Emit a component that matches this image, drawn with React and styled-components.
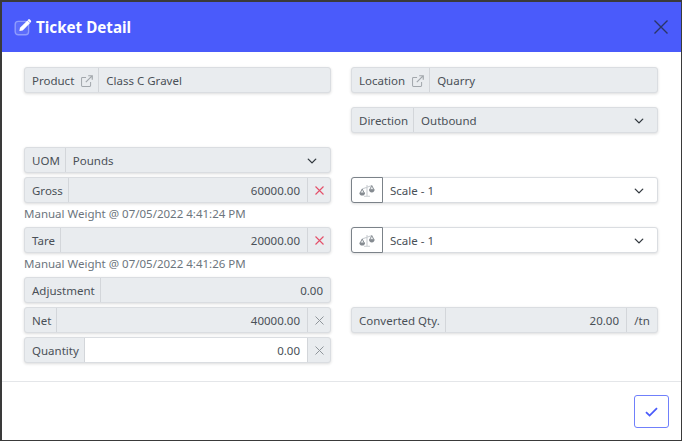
import React from 'react';
import styled, { createGlobalStyle } from 'styled-components';

const GlobalStyle = createGlobalStyle`
  html, body {
    margin: 0;
    padding: 0;
    background: #fff;
  }
  body {
    font-family: "Noto Sans", "Open Sans", sans-serif;
  }
`;

const Dialog = styled.div`
  box-sizing: border-box;
  width: 682px;
  height: 441px;
  border: 1px solid #3a3a3a;
  border-top-width: 2px;
  border-left-width: 2px;
  display: flex;
  flex-direction: column;
  background: #fff;
`;

const Header = styled.header`
  height: 50px;
  flex: none;
  background: #4a5bfb;
  display: flex;
  align-items: center;
  justify-content: space-between;
  padding: 0 12px;
`;

const Title = styled.h1`
  margin: 0;
  display: flex;
  align-items: center;
  gap: 4px;
  font-size: 15.2px;
  font-weight: 700;
  color: #fff;
`;

const Close = styled.button`
  border: 0;
  padding: 0;
  background: none;
  display: flex;
  width: 16px;
  height: 16px;
`;

const Body = styled.main`
  flex: none;
  height: 330px;
  box-sizing: border-box;
  padding: 15px 22px 0;
  display: grid;
  grid-template-columns: 307px 307px;
  column-gap: 20px;
  align-content: start;
  border-bottom: 1px solid #e4e6e9;
`;

const Cell = styled.div`
  margin-bottom: ${(p) => p.$gap ?? 4}px;
  min-height: 26px;
`;

const Group = styled.div`
  display: flex;
  height: 26px;
  box-sizing: border-box;
  border: 1px solid #dadde1;
  border-radius: 3px;
  background: #e9ecef;
  box-shadow: 0 1px 3px rgba(0, 0, 0, 0.14);
  font-size: 11.5px;
  line-height: 26px;
  color: #495057;
  overflow: hidden;
`;

const Label = styled.span`
  flex: none;
  display: flex;
  align-items: center;
  gap: 7px;
  padding: 1px 5px 0 7px;
  border-right: 1px solid #d3d6da;
  white-space: nowrap;
`;

const Value = styled.span`
  flex: 1;
  display: flex;
  align-items: center;
  justify-content: ${(p) => (p.$right ? 'flex-end' : 'space-between')};
  padding: 1px 7px 0;
  background: ${(p) => (p.$white ? '#fff' : 'transparent')};
  white-space: nowrap;
`;

const Addon = styled.span`
  flex: none;
  width: 22px;
  display: flex;
  align-items: center;
  justify-content: center;
  border-left: 1px solid #d3d6da;
`;

const Unit = styled(Addon)`
  width: 30px;
  padding-top: 1px;
  color: #495057;
`;

const ScaleButton = styled.span`
  flex: none;
  width: 30px;
  margin: -1px 0 -1px -1px;
  display: flex;
  align-items: center;
  justify-content: center;
  border: 1px solid #7b8289;
  border-radius: 3px 0 0 3px;
  background: #fff;
`;

const WhiteGroup = styled(Group)`
  background: #fff;
  overflow: visible;
`;

const Note = styled.div`
  height: 20px;
  line-height: 22px;
  font-size: 11.5px;
  color: #6c757d;
`;

const Footer = styled.footer`
  flex: 1;
  display: flex;
  justify-content: flex-end;
  align-items: flex-start;
  padding: 13px 12px 0 0;
`;

const Confirm = styled.button`
  width: 35px;
  height: 33px;
  padding: 0;
  display: flex;
  align-items: center;
  justify-content: center;
  background: #fff;
  border: 1px solid #7080fb;
  border-radius: 3px;
`;

const ChevronBox = styled.span`
  display: flex;
  margin-right: 6px;
`;

const EditIcon = () => (
  <svg width="18" height="18" viewBox="0 0 18 18">
    <rect x="1.2" y="3.4" width="13.4" height="13.4" rx="3" fill="#7e8dfd" stroke="#8f9cfd" strokeWidth="1.4" fillOpacity="0.35" />
    <path d="M6 9.8 13.4 2.4l2.7 2.7L8.7 12.5l-3.3.6z" fill="#fff" />
    <path d="M14.2 1.6c.5-.5 1.2-.5 1.7 0l.9.9c.5.5.5 1.2 0 1.7l-.6.6-2.6-2.6z" fill="#fff" />
  </svg>
);

const LinkIcon = () => (
  <svg width="12" height="12" viewBox="0 0 13 13" fill="none" stroke="#a2a7ac" strokeWidth="1.1">
    <path d="M5.5 2.6H1.6a1 1 0 0 0-1 1v7.8a1 1 0 0 0 1 1h7.8a1 1 0 0 0 1-1V7.5" />
    <path d="M5.2 7.8 12 1M7.8.8h4.4v4.4" strokeWidth="1.3" />
  </svg>
);

const ScaleIcon = () => (
  <svg width="16" height="13" viewBox="0 0 16 13" fill="none">
    <path d="M8 1v11M5 12.2h6M3 5l10-3.4" stroke="#c9cdd1" strokeWidth="1.1" />
    <path d="M3.2 5 1 9.2h4.4zM12.8 1.6l-2.2 4.2H15z" fill="#eceef0" stroke="#8a9096" strokeWidth="1" strokeLinejoin="round" />
    <path d="M.4 8.8h5.6a2.8 2.8 0 0 1-5.6 0zM10 5.6h5.6a2.8 2.8 0 0 1-5.6 0z" fill="#858b91" />
  </svg>
);

const Chevron = () => (
  <ChevronBox>
    <svg width="10" height="10" viewBox="0 0 16 16" fill="none" stroke="#343a40" strokeWidth="2.2" strokeLinecap="round" strokeLinejoin="round">
      <path d="m2 5 6 6 6-6" />
    </svg>
  </ChevronBox>
);

const ClearMark = ({ danger }) => (
  <svg width="9" height="9" viewBox="0 0 9 9" stroke={danger ? '#e4506a' : '#8f959a'} strokeWidth={danger ? 1.1 : 1}>
    <path d="M.5.5l8 8M8.5.5l-8 8" />
  </svg>
);

const Check = () => (
  <svg width="13" height="10" viewBox="0 0 13 10" fill="none" stroke="#4a5bfb" strokeWidth="1.8">
    <path d="M1 5.2 4.6 8.6 12 1.2" />
  </svg>
);

const ReadOnly = ({ label, link, children, select }) => (
  <Group>
    <Label>
      {label}
      {link && <LinkIcon />}
    </Label>
    <Value>
      {children}
      {select && <Chevron />}
    </Value>
  </Group>
);

const NumberField = ({ label, value, white, clear }) => (
  <Group>
    <Label>{label}</Label>
    <Value $right $white={white}>{value}</Value>
    {clear && (
      <Addon>
        <ClearMark danger={clear === 'danger'} />
      </Addon>
    )}
  </Group>
);

const ScaleSelect = () => (
  <WhiteGroup>
    <ScaleButton>
      <ScaleIcon />
    </ScaleButton>
    <Value>
      Scale - 1
      <Chevron />
    </Value>
  </WhiteGroup>
);

const App = () => (
  <Dialog>
    <GlobalStyle />
    <Header>
      <Title>
        <EditIcon />
        Ticket Detail
      </Title>
      <Close aria-label="Close">
        <svg width="16" height="16" viewBox="0 0 16 16" stroke="#2b3566" strokeWidth="1.4">
          <path d="M1.5 1.5l13 13M14.5 1.5l-13 13" />
        </svg>
      </Close>
    </Header>
    <Body>
      <Cell $gap={14}>
        <ReadOnly label="Product" link>Class C Gravel</ReadOnly>
      </Cell>
      <Cell $gap={14}>
        <ReadOnly label="Location" link>Quarry</ReadOnly>
      </Cell>

      <Cell $gap={14} />
      <Cell $gap={14}>
        <ReadOnly label="Direction" select>Outbound</ReadOnly>
      </Cell>

      <Cell>
        <ReadOnly label="UOM" select>Pounds</ReadOnly>
      </Cell>
      <Cell />

      <Cell>
        <NumberField label="Gross" value="60000.00" clear="danger" />
        <Note>Manual Weight @ 07/05/2022 4:41:24 PM</Note>
      </Cell>
      <Cell>
        <ScaleSelect />
      </Cell>

      <Cell>
        <NumberField label="Tare" value="20000.00" clear="danger" />
        <Note>Manual Weight @ 07/05/2022 4:41:26 PM</Note>
      </Cell>
      <Cell>
        <ScaleSelect />
      </Cell>

      <Cell>
        <NumberField label="Adjustment" value="0.00" />
      </Cell>
      <Cell />

      <Cell>
        <NumberField label="Net" value="40000.00" clear="plain" />
      </Cell>
      <Cell>
        <Group>
          <Label>Converted Qty.</Label>
          <Value $right>20.00</Value>
          <Unit>/tn</Unit>
        </Group>
      </Cell>

      <Cell>
        <NumberField label="Quantity" value="0.00" white clear="plain" />
      </Cell>
      <Cell />
    </Body>
    <Footer>
      <Confirm aria-label="Save">
        <Check />
      </Confirm>
    </Footer>
  </Dialog>
);

export default App;
